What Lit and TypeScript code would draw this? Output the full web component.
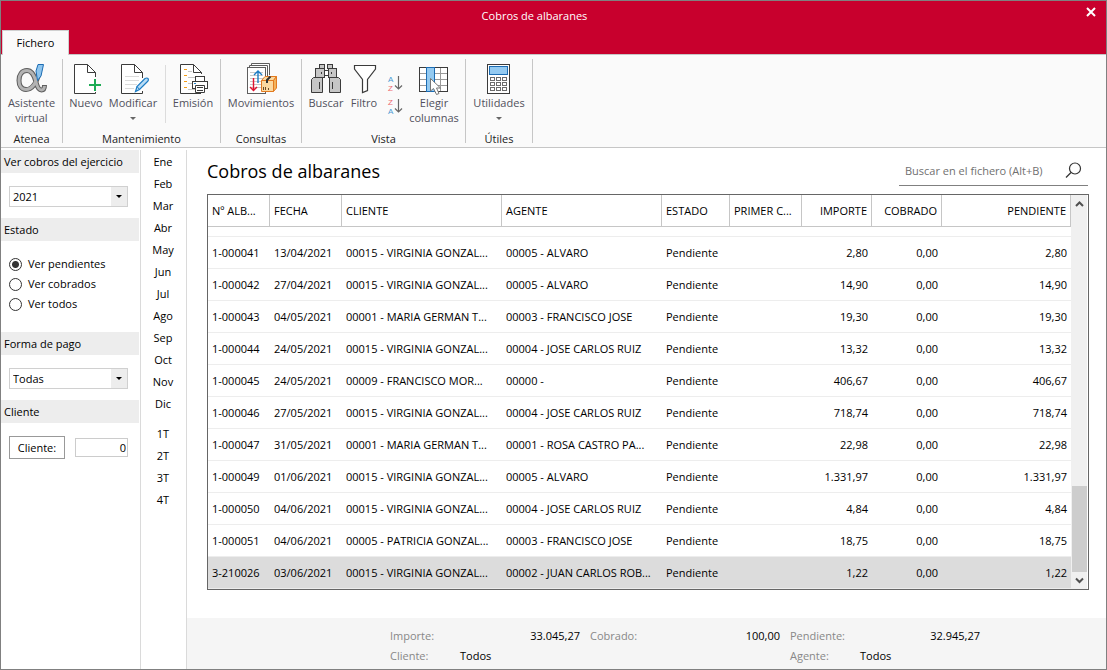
import { LitElement, html, css, svg, nothing } from "lit";
import { customElement, property, state } from "lit/decorators.js";
import { classMap } from "lit/directives/class-map.js";

const icons: Record<string, unknown> = {
  assistant: svg`<svg width="32" height="32" viewBox="0 0 32 32" fill="none">
    <path d="M23 10C20.500 20 16 26.500 10 26.500C5.300 26.500 3 22.500 3 17.500C3 11.500 6 7.500 11 7.500C16.500 7.500 18.500 13 20 19C21.200 24 22.500 27 25.500 27C27.500 27 28.500 25 28.500 22" stroke="#5e5e5e" stroke-width="5"/>
    <path d="M22.600 11.500C20 20 16 26.500 10 26.500C5.300 26.500 3 22.500 3 17.500C3 11.500 6 7.500 11 7.500C16.500 7.500 18.500 13 20 19C21.200 24 22.500 27 25.500 27C27.500 27 28.300 25.500 28.500 23" stroke="#b3b3b3" stroke-width="3"/>
    <path d="M22 1.500H27.500L25 13L21.500 17.500L20 8Z" fill="#8ec5ee" stroke="#1c6cb3"/>
  </svg>`,
  create: svg`<svg width="32" height="32" viewBox="0 0 32 32" fill="none" stroke="#3b3b3b">
    <path d="M25.500 14V9.500L17.500 1.500H4.500V30.500H25.500V29M17.500 1.500V9.500H25.500" fill="#fff"/>
    <path d="M25 16V28M19 22H31" stroke="#1dab54" stroke-width="2"/>
  </svg>`,
  edit: svg`<svg width="32" height="32" viewBox="0 0 32 32" fill="none" stroke="#3b3b3b">
    <path d="M25.500 15V9.500L17.500 1.500H4.500V30.500H25.500V28M17.500 1.500V9.500H25.500" fill="#fff"/>
    <path d="M8 13.500H22M8 17.500H22M8 21.500H20M8 25.500H17" stroke="#dadada"/>
    <path d="M18.500 28.500L20 23.500L28 15.500Q30 14.500 31 15.500Q32 17 30.500 18.500L22.500 26.500Z" fill="#b9dcf5" stroke="#1c7cc4" stroke-width="1.200"/>
    <path d="M20 23.500L22.500 26.500" stroke="#1c7cc4"/>
  </svg>`,
  print: svg`<svg width="32" height="32" viewBox="0 0 32 32" fill="none" stroke="#3b3b3b">
    <path d="M24.500 9.500L16.500 1.500H3.500V30.500H17L24.500 12Z" fill="#fff" stroke="none"/>
    <path d="M24.500 11V9.500L16.500 1.500H3.500V30.500H24M16.500 1.500V9.500H24.500"/>
    <path d="M7 6.500H10M7 12.500H10M7 18.500H10M7 24.500H10" stroke="#f59d17"/>
    <path d="M11 8.500H15M11 14.500H18M11 20.500H16M11 26.500H18" stroke="#c6c6c6"/>
    <rect x="18.500" y="13.500" width="9" height="6" fill="#fff"/>
    <rect x="15.500" y="18.500" width="15" height="7" fill="#fff"/>
    <path d="M18.500 22.500H27.500V29.500H18.500Z" fill="#fff"/><path d="M20 24.500H26M20 27.500H26"/>
    <path d="M17 20.500H19" stroke="#2383c9"/>
  </svg>`,
  moves: svg`<svg width="32" height="32" viewBox="0 0 32 32" fill="none" stroke="#5e5e5e">
    <path d="M6.500 5V.500H24.500V12" fill="#fff"/><path d="M4.500 6V2.500H22.500V14" fill="#fff"/>
    <rect x="2.500" y="4.500" width="18" height="26" fill="#fff"/>
    <path d="M5 9.500H18M5 12.500H18M5 15.500H18M5 18.500H16M5 21.500H16M5 24.500H16" stroke="#c9c9c9"/>
    <path d="M13 20V8.500M9 12L13 8L17 12" stroke="#1c7cc4" stroke-width="1.400"/>
    <path d="M8.500 15V27M5 24L8.500 27.500L12 24" stroke="#df1230" stroke-width="1.400"/>
    <path d="M16.500 17.500L20 13.500H31.500L28.500 17.500V28.500H16.500Z" fill="#fbd9a0" stroke="#e27a20"/>
    <path d="M28.500 17.500L31.500 13.500V25L28.500 28.500Z" fill="#f3b35b" stroke="#e27a20"/>
    <path d="M16.500 17.500H28.500" stroke="#e27a20"/><path d="M22 20V17L25.500 13.500" stroke="#333" stroke-width="2"/>
    <path d="M18.500 24V27M20.500 24V27M23.500 25V27" stroke="#6b4b28"/>
  </svg>`,
  find: svg`<svg width="32" height="32" viewBox="0 0 32 32" fill="#c6c6c6" stroke="#3b3b3b">
    <rect x="9.500" y="1.500" width="5" height="4"/><rect x="17.500" y="1.500" width="5" height="4"/>
    <rect x="14.500" y="7.500" width="4" height="5" fill="#fff"/>
    <rect x="5.500" y="5.500" width="9" height="9"/><rect x="18.500" y="5.500" width="8" height="9"/>
    <path d="M3.500 14.500H12.500V29.500H1.500V16.500Z"/><path d="M19.500 14.500H28.500L30.500 16.500V29.500H19.500Z"/>
    <path d="M11.500 9V11M21.500 9V11M9.500 19V26M22.500 19V26"/>
  </svg>`,
  filter: svg`<svg width="32" height="32" viewBox="0 0 32 32" fill="#fff" stroke="#3b3b3b">
    <path d="M6.500 2.500H27.500V6L19.500 16.500V27.500L14.500 29.500V16.500L6.500 6Z" stroke-width="1.200"/>
  </svg>`,
  columns: svg`<svg width="32" height="32" viewBox="0 0 32 32" fill="none">
    <rect x="1.500" y="4.500" width="28" height="24" fill="#fff" stroke="#3b3b3b"/>
    <path d="M2 10.500H29M2 16.500H29M2 22.500H29M22.500 5V28" stroke="#9a9a9a"/>
    <rect x="8.500" y="4.500" width="8" height="24" fill="#94caf1" stroke="#1c6cb3"/>
    <path d="M12.500 15.500V28L15.500 25.500L18.500 31.500L21 30.500L18.500 25H22.500Z" fill="#fff" stroke="#777"/>
  </svg>`,
  calc: svg`<svg width="32" height="32" viewBox="0 0 32 32" fill="#fff">
    <rect x="4.500" y="1.500" width="22" height="29" stroke="#3b3b3b"/>
    <rect x="6.500" y="3.500" width="18" height="8" fill="#94caf1" stroke="#1c6cb3"/>
    ${[14.5, 19.5, 24.5].map((y) => [7.5, 13.5, 19.5].map((x) => svg`<rect x=${x} y=${y} width="4" height="3" stroke="#6b6b6b"/>`))}
  </svg>`,
};

@customElement("ribbon-button")
class RibbonButton extends LitElement {
  @property() icon = "";
  @property() label = "";
  @property({ type: Boolean }) menu = false;
  static styles = css`
    :host { display: block; }
    button {
      display: flex; flex-direction: column; align-items: center; width: 100%;
      border: 0; padding: 0; margin: 0; background: none; color: #51515c;
      font: 11px/15px "Open Sans", "Noto Sans", sans-serif; white-space: pre-line;
    }
    button:hover { background: #ececec; }
    svg { display: block; }
    .arrow { margin-top: 7px; }
  `;
  render() {
    return html`<button type="button">${icons[this.icon]}<span class="label">${this.label}</span>
      ${this.menu ? html`<svg class="arrow" width="6" height="3" viewBox="0 0 6 3"><path d="M0 0H6L3 3Z" fill="#666"/></svg>` : nothing}
    </button>`;
  }
}

const months = ["Ene", "Feb", "Mar", "Abr", "May", "Jun", "Jul", "Ago", "Sep", "Oct", "Nov", "Dic"];
const quarters = ["1T", "2T", "3T", "4T"];
const headers = ["Nº ALB...", "FECHA", "CLIENTE", "AGENTE", "ESTADO", "PRIMER C...", "IMPORTE", "COBRADO", "PENDIENTE"];
const virginia = "00015 - VIRGINIA GONZAL...";
const rows = [
  ["1-000041", "13/04/2021", virginia, "00005 - ALVARO", "2,80"],
  ["1-000042", "27/04/2021", virginia, "00005 - ALVARO", "14,90"],
  ["1-000043", "04/05/2021", "00001 - MARIA GERMAN T...", "00003 - FRANCISCO JOSE", "19,30"],
  ["1-000044", "24/05/2021", virginia, "00004 - JOSE CARLOS RUIZ", "13,32"],
  ["1-000045", "24/05/2021", "00009 - FRANCISCO MOR...", "00000 -", "406,67"],
  ["1-000046", "27/05/2021", virginia, "00004 - JOSE CARLOS RUIZ", "718,74"],
  ["1-000047", "31/05/2021", "00001 - MARIA GERMAN T...", "00001 - ROSA CASTRO PA...", "22,98"],
  ["1-000049", "01/06/2021", virginia, "00005 - ALVARO", "1.331,97"],
  ["1-000050", "04/06/2021", virginia, "00004 - JOSE CARLOS RUIZ", "4,84"],
  ["1-000051", "04/06/2021", "00005 - PATRICIA GONZAL...", "00003 - FRANCISCO JOSE", "18,75"],
  ["3-210026", "03/06/2021", virginia, "00002 - JUAN CARLOS ROB...", "1,22"],
];

@customElement("app-root")
class AppRoot extends LitElement {
  @state() private selected = "3-210026";
  @state() private filter = "Ver pendientes";

  static styles = css`
    :host {
      display: flex; flex-direction: column; box-sizing: border-box; min-height: 100vh;
      border: 1px solid #808080; background: #fff; color: #000;
      font: 11px/16px "Open Sans", "Noto Sans", sans-serif;
    }
    * { box-sizing: border-box; }
    svg { display: block; }
    h1, h2 { margin: 0; font-weight: 400; }
    button, input, select { font: inherit; color: inherit; margin: 0; border-radius: 0; }
    .titlebar {
      display: grid; grid-template: 29px 24px / 1fr auto 1fr; background: #c8002d; color: #fff;
    }
    .titlebar h1 { grid-column: 2; align-self: center; font-size: 11px; line-height: 16px; margin-right: 38px; }
    .close { justify-self: end; width: 30px; height: 22px; border: 0; padding: 0; background: none; display: grid; place-items: center; }
    .tab {
      grid-row: 2; grid-column: 1; justify-self: start; width: 67px; margin: 0 0 -1px 1px; padding: 0;
      border: solid #d0d0d0; border-width: 1px 1px 0; background: #fafafa; color: #000; z-index: 1;
    }
    .ribbon { display: flex; background: #fafafa; border: solid #c6c6c6; border-width: 1px 0; padding: 4px 0; height: 94px; }
    .group { display: flex; flex-direction: column; justify-content: space-between; border-right: 1px solid #c6c6c6; }
    .tools { display: flex; padding-top: 4px; }
    .tools.edit { padding-left: 2px; }
    .tools.view { padding: 4px 3px 0 4px; }
    .caption { text-align: center; height: 8px; line-height: 8px; color: #222; }
    .divider { width: 1px; height: 58px; background: #dcdcdc; margin: 2px 0 0 6px; }
    .w36 { width: 36px; } .w40 { width: 40px; } .w42 { width: 42px; } .w52 { width: 52px; }
    .w54 { width: 54px; } .w56 { width: 56px; } .w61 { width: 61px; } .w66 { width: 66px; } .w80 { width: 80px; }
    .sorts { width: 24px; display: flex; flex-direction: column; gap: 5px; padding: 11px 0 0 6px; }
    .sorts button { border: 0; padding: 0; background: none; }
    .sorts svg { overflow: visible; }
    .body { flex: 1; display: grid; grid-template-columns: 139px 47px 1fr; padding-top: 2px; }
    .side { padding-right: 1px; }
    .side h2 { background: #ededed; height: 23px; padding: 0 3px; font-size: 11px; line-height: 23px; }
    .field { padding: 13px 11px 11px 8px; }
    .combo { display: grid; height: 21px; }
    .combo select {
      grid-area: 1 / 1; appearance: none; width: 100%; height: 21px; border: 1px solid #d0d0d0; padding: 0 20px 0 3px; background: #fff;
    }
    .combo svg { grid-area: 1 / 1; justify-self: end; margin: 1px; pointer-events: none; }
    .radios { display: flex; flex-direction: column; padding: 13px 8px 18px; }
    .radios label { display: flex; align-items: center; gap: 6px; height: 20px; }
    .radios input {
      appearance: none; width: 13px; height: 13px; border: 1px solid #333; border-radius: 50%; background: #fff;
    }
    .radios input:checked { background: radial-gradient(#333 0 3px, #fff 4px); }
    .client { display: flex; align-items: center; justify-content: space-between; padding: 13px 11px 0 8px; }
    .client button { width: 56px; height: 23px; padding: 0; border: 1px solid #999; background: #fff; }
    .client input { width: 53px; height: 19px; padding: 0 1px; border: 1px solid #ccc; text-align: right; }
    .periods { border: solid #dadada; border-width: 0 1px; display: flex; flex-direction: column; padding: 1px 1px 0 0; }
    .periods button { height: 22px; border: 0; padding: 0; background: none; text-align: center; }
    .periods .first { margin-top: 8px; }
    .main { display: flex; flex-direction: column; min-width: 0; }
    .head { display: flex; justify-content: space-between; padding: 0 18px 0 20px; }
    .head h2 { font-size: 18px; line-height: 24px; padding-top: 9px; }
    .search { width: 189px; height: 36px; display: flex; align-items: center; border-bottom: 1px solid #808080; padding: 6px 6px 0 6px; }
    .search input { flex: 1; min-width: 0; border: 0; padding: 0; background: none; outline: 0; }
    .search input::placeholder { color: #707070; opacity: 1; }
    .search button { border: 0; padding: 0; background: none; }
    .grid { display: flex; border: 1px solid #666; margin: 8px 17px 28px 20px; }
    table { flex: 1; width: 0; table-layout: fixed; border-collapse: separate; border-spacing: 0; font-size: 11px; }
    th, td { padding: 0 4px; text-align: left; white-space: nowrap; overflow: hidden; font-weight: 400; }
    th { height: 32px; border: solid #c6c6c6; border-width: 0 1px 1px 0; }
    td { height: 32px; border-bottom: 1px solid #ededed; }
    .peek td { height: 10px; }
    .num { text-align: right; }
    .selected td { background: #dcdcdc; }
    .c62 { width: 62px; } .c68 { width: 68px; } .c70 { width: 70px; } .c72 { width: 72px; } .c160 { width: 160px; }
    .scroll { width: 17px; display: flex; flex-direction: column; background: #f0f0f0; border-right: 1px solid #fff; padding-left: 1px; }
    .scroll .track { flex: 1; display: flex; flex-direction: column; justify-content: flex-end; }
    .thumb { height: 24%; background: #cdcdcd; }
    .totals {
      margin-top: auto; background: #f5f5f5; padding: 8px 20px 3px 203px; color: #888;
      display: grid; grid-template-columns: repeat(3, 190px); column-gap: 10px; line-height: 20px;
    }
    .total { display: flex; justify-content: space-between; }
    .who { display: grid; grid-template-columns: 70px 1fr; }
    .who.agent { grid-column: 3; }
    .value { color: #000; }
  `;

  private combo(label: string, value: string) {
    return html`<div class="field"><div class="combo">
      <select aria-label=${label}><option>${value}</option></select>
      <svg width="16" height="19" viewBox="0 0 16 19"><path d="M0 0H16V19H0Z" fill="#ededed"/><path d="M5 8H11L8 11Z" fill="#000"/></svg>
    </div></div>`;
  }

  private sort(up: boolean) {
    return html`<button type="button" aria-label=${up ? "Orden descendente" : "Orden ascendente"}>
      <svg width="16" height="18" viewBox="0 0 16 18" font-family="Liberation Sans, sans-serif" font-size="8">
        <text x="0" y="8" fill=${up ? "#ee6a70" : "#4a9bd4"}>${up ? "Z" : "A"}</text>
        <text x="0" y="17" fill=${up ? "#4a9bd4" : "#ee6a70"}>${up ? "A" : "Z"}</text>
        <path d="M10.500 2V15M7 11.500L10.500 15L14 11.500" fill="none" stroke="#666" stroke-width="1.200"/>
      </svg></button>`;
  }

  private arrow(up: boolean) {
    return html`<svg width="15" height="17" viewBox="0 0 15 17"><path d=${up ? "M4 11L7.500 7.500L11 11" : "M4 6.500L7.500 10L11 6.500"} fill="none" stroke="#505050" stroke-width="2"/></svg>`;
  }

  render() {
    return html`
      <header class="titlebar">
        <h1>Cobros de albaranes</h1>
        <button class="close" type="button" aria-label="Cerrar"><svg width="10" height="10" viewBox="0 0 10 10"><path d="M1 1L9 9M9 1L1 9" stroke="#fff" stroke-width="2"/></svg></button>
        <button class="tab" type="button">Fichero</button>
      </header>
      <nav class="ribbon">
        <div class="group">
          <div class="tools"><ribbon-button class="w61" icon="assistant" label=${"Asistente\nvirtual"}></ribbon-button></div>
          <div class="caption">Atenea</div>
        </div>
        <div class="group">
          <div class="tools edit">
            <ribbon-button class="w42" icon="create" label="Nuevo"></ribbon-button>
            <ribbon-button class="w52" icon="edit" label="Modificar" menu></ribbon-button>
            <div class="divider"></div>
            <ribbon-button class="w54" icon="print" label="Emisión"></ribbon-button>
          </div>
          <div class="caption">Mantenimiento</div>
        </div>
        <div class="group">
          <div class="tools"><ribbon-button class="w80" icon="moves" label="Movimientos"></ribbon-button></div>
          <div class="caption">Consultas</div>
        </div>
        <div class="group">
          <div class="tools view">
            <ribbon-button class="w40" icon="find" label="Buscar"></ribbon-button>
            <ribbon-button class="w36" icon="filter" label="Filtro"></ribbon-button>
            <div class="sorts">${this.sort(false)}${this.sort(true)}</div>
            <ribbon-button class="w56" icon="columns" label=${"Elegir\ncolumnas"}></ribbon-button>
          </div>
          <div class="caption">Vista</div>
        </div>
        <div class="group">
          <div class="tools"><ribbon-button class="w66" icon="calc" label="Utilidades" menu></ribbon-button></div>
          <div class="caption">Útiles</div>
        </div>
      </nav>
      <div class="body">
        <aside class="side">
          <h2>Ver cobros del ejercicio</h2>
          ${this.combo("Ver cobros del ejercicio", "2021")}
          <h2>Estado</h2>
          <div class="radios">
            ${["Ver pendientes", "Ver cobrados", "Ver todos"].map((t) => html`<label>
              <input type="radio" name="estado" .checked=${this.filter === t} @change=${() => (this.filter = t)} />${t}</label>`)}
          </div>
          <h2>Forma de pago</h2>
          ${this.combo("Forma de pago", "Todas")}
          <h2>Cliente</h2>
          <div class="client"><button type="button">Cliente:</button><input aria-label="Cliente" value="0" /></div>
        </aside>
        <nav class="periods">
          ${months.map((m) => html`<button type="button">${m}</button>`)}
          ${quarters.map((q, i) => html`<button type="button" class=${classMap({ first: i === 0 })}>${q}</button>`)}
        </nav>
        <main class="main">
          <div class="head">
            <h2>Cobros de albaranes</h2>
            <div class="search">
              <input type="text" aria-label="Buscar en el fichero" placeholder="Buscar en el fichero (Alt+B)" />
              <button type="button" aria-label="Buscar"><svg width="17" height="17" viewBox="0 0 17 17" fill="none" stroke="#333" stroke-width="1.200"><circle cx="10" cy="6.500" r="5.500"/><path d="M6 10.500L1 15.500"/></svg></button>
            </div>
          </div>
          <div class="grid">
            <table>
              <colgroup><col class="c62" /><col class="c72" /><col class="c160" /><col class="c160" /><col class="c68" /><col class="c72" /><col class="c70" /><col class="c70" /><col /></colgroup>
              <thead><tr>${headers.map((h, i) => html`<th class=${classMap({ num: i > 5 })}>${h}</th>`)}</tr></thead>
              <tbody>
                <tr class="peek"><td colspan="9"></td></tr>
                ${rows.map(([id, date, client, agent, amount]) => html`<tr class=${classMap({ selected: this.selected === id })} @click=${() => (this.selected = id)}>
                  <td>${id}</td><td>${date}</td><td>${client}</td><td>${agent}</td><td>Pendiente</td><td></td>
                  <td class="num">${amount}</td><td class="num">0,00</td><td class="num">${amount}</td></tr>`)}
              </tbody>
            </table>
            <div class="scroll">${this.arrow(true)}<div class="track"><div class="thumb"></div></div>${this.arrow(false)}</div>
          </div>
          <footer class="totals">
            <div class="total"><span>Importe:</span><span class="value">33.045,27</span></div>
            <div class="total"><span>Cobrado:</span><span class="value">100,00</span></div>
            <div class="total"><span>Pendiente:</span><span class="value">32.945,27</span></div>
            <div class="who"><span>Cliente:</span><span class="value">Todos</span></div>
            <div class="who agent"><span>Agente:</span><span class="value">Todos</span></div>
          </footer>
        </main>
      </div>`;
  }
}
